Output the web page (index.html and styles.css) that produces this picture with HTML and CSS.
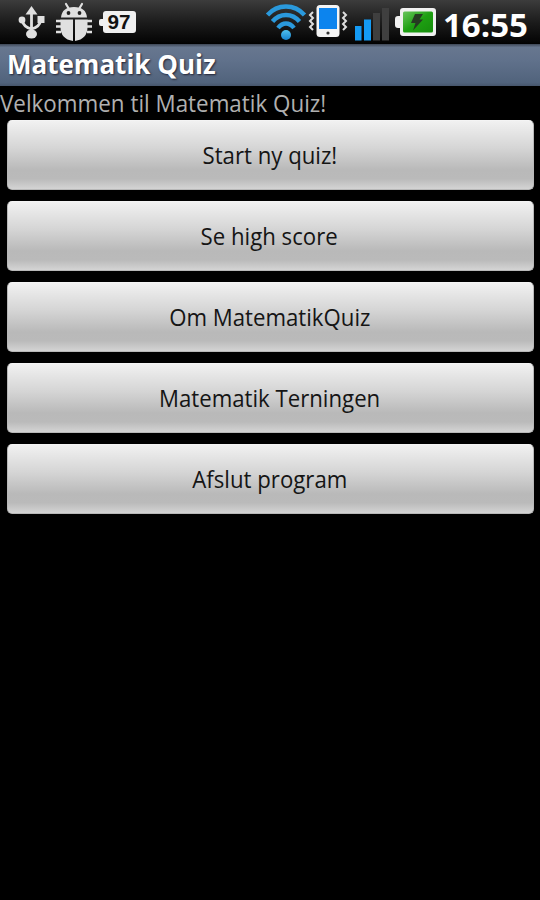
FILE: index.html
```
<!DOCTYPE html>
<html lang="da">
<head>
	<meta charset="UTF-8">
	<title>Matematik Quiz</title>
	<link rel="stylesheet" href="styles.css">
</head>
<body>
	<div class="statusbar">
		<div class="notifications">
			<svg class="usb" width="28" height="36" viewBox="0 0 28 36">
				<g fill="none" stroke="#e0e0e0" stroke-width="2.8">
					<path d="M13.500 7V30M4.500 15v2q1 6 9 8M22.500 15v2q-1 6-9 8"/>
				</g>
				<path d="M13.500 2l6 8.500h-12z" fill="#e0e0e0"/>
				<circle cx="4" cy="16" r="3.400" fill="#e0e0e0"/>
				<path d="M19.500 12h7v7h-7z" fill="#e0e0e0"/>
				<ellipse cx="13.500" cy="30" rx="5.500" ry="4.500" fill="#e0e0e0"/>
			</svg>
			<svg class="bug" width="40" height="40" viewBox="0 0 40 40">
				<g stroke="#e0e0e0" fill="none">
					<path d="M12 2l3 5M28 2l-3 5" stroke-width="2.200" stroke-linecap="round"/>
					<path d="M2 19h5M2 24.500h5M2 30h5M33 19h5M33 24.500h5M33 30h5" stroke-width="2.600"/>
				</g>
				<path d="M7 15.500Q8 5 20 5t13 10.500zM6.500 17.500h12.500v21.500Q6.500 37 6.500 25zM21 17.500h12.500V25Q33.500 37 21 39z" fill="#e0e0e0"/>
				<circle cx="14.500" cy="11" r="1.900" fill="#222"/>
				<circle cx="25.500" cy="11" r="1.900" fill="#222"/>
			</svg>
			<svg class="level" width="40" height="26" viewBox="0 0 40 26">
				<path d="M7 2h27q3 0 3 3v16q0 3-3 3H7q-3 0-3-3v-4H2q-2 0-2-2v-3q0-2 2-2h2V5q0-3 3-3z" fill="#f0f0f0"/>
				<text x="8.500" y="20" textLength="23" lengthAdjust="spacingAndGlyphs">97</text>
			</svg>
		</div>
		<div class="system">
			<svg class="wifi" width="42" height="38" viewBox="0 0 42 38">
				<defs>
					<linearGradient id="blue" x1="0" y1="0" x2="0" y2="1">
						<stop offset="0" stop-color="#4fc0ee"/>
						<stop offset="1" stop-color="#1683d0"/>
					</linearGradient>
				</defs>
				<g fill="none" stroke="#2a99dc" stroke-width="4.400">
					<path d="M2.500 12Q10 3.500 21 3.500T39.500 12"/>
					<path d="M7.500 18.500Q13 12 21 12t13.500 6.500"/>
					<path d="M13 25Q16.500 20.500 21 20.500T29 25"/>
				</g>
				<circle cx="21" cy="32" r="5" fill="url(#blue)"/>
			</svg>
			<svg class="vibrate" width="40" height="34" viewBox="0 0 40 34">
				<rect x="8.500" y="1" width="23" height="32" rx="3.500" fill="#f4f4f4"/>
				<rect x="11" y="4" width="18" height="21" fill="#0c84ee"/>
				<circle cx="20" cy="29" r="1.600" fill="#333"/>
				<g fill="none" stroke="#ddd" stroke-width="2">
					<path d="M5 8l-3 3 3 3-3 3 3 3-3 3 3 3"/>
					<path d="M35 8l3 3-3 3 3 3-3 3 3 3-3 3"/>
				</g>
			</svg>
			<svg class="signal" width="34" height="34" viewBox="0 0 34 34">
				<path d="M0 19h6.500v14.500H0zM9 12.500h7v21H9z" fill="#149bf5"/>
				<path d="M18 6h7v27.500h-7zM27 1h7v32.500h-7z" fill="#3f3f3f"/>
			</svg>
			<svg class="battery" width="42" height="28" viewBox="0 0 42 28">
				<defs>
					<linearGradient id="green" x1="0" y1="0" x2="1" y2="1">
						<stop offset="0" stop-color="#69c45c"/>
						<stop offset=".5" stop-color="#1ea012"/>
						<stop offset="1" stop-color="#168c0c"/>
					</linearGradient>
				</defs>
				<path d="M8 0h30q3 0 3 3v22q0 3-3 3H8q-3 0-3-3v-5H3q-3 0-3-3v-6q0-3 3-3h2V3q0-3 3-3z" fill="#f0f0f0"/>
				<rect x="8" y="3.500" width="30" height="21" rx="1.500" fill="url(#green)"/>
				<path d="M20 6h8l-3.500 5.500H28L18 22.500l2.500-7.500H16z" fill="#263a22"/>
			</svg>
			<span class="clock">16:55</span>
		</div>
	</div>
	<h1 class="titlebar">Matematik Quiz</h1>
	<p class="welcome"><span>Velkommen til Matematik Quiz!</span></p>
	<div class="menu">
		<button><span>Start ny quiz!</span></button>
		<button><span>Se high score</span></button>
		<button><span>Om MatematikQuiz</span></button>
		<button><span>Matematik Terningen</span></button>
		<button><span>Afslut program</span></button>
	</div>
</body>
</html>
```
FILE: styles.css
```
body {
	margin: 0;
	width: 540px;
	height: 900px;
	overflow: hidden;
	background-color: #000;
	font-family: "Open Sans", "Noto Sans", sans-serif;
}
.statusbar {
	display: flex;
	justify-content: space-between;
	height: 44px;
	background: linear-gradient(#3c3c3c, #1c1c1c 50%, #050505 95%, #000);
}
.notifications, .system {
	display: flex;
	align-items: flex-start;
}
.usb {
	margin: 4px 0 0 18px;
}
.bug {
	margin: 2px 0 0 8px;
}
.level {
	margin: 9px 0 0 5px;
}
.level text {
	font: bold 21px "Liberation Sans", Arial, sans-serif;
	fill: #111;
}
.wifi {
	margin-top: 3px;
}
.vibrate {
	margin: 4px 0 0 1px;
}
.signal {
	margin: 7px 0 0 7px;
}
.battery {
	margin: 8px 0 0 6px;
}
.clock {
	width: 87px;
	margin: 2px 10px 0 6px;
	color: #fff;
	font-size: 33px;
	font-weight: bold;
	line-height: 46px;
	white-space: nowrap;
}
.titlebar {
	height: 42px;
	margin: 0;
	padding-left: 7px;
	background: linear-gradient(#3d4655, #67778f 8%, #60718b 40%, #51637c 92%, #47566c);
	color: #fff;
	font-size: 26px;
	font-weight: bold;
	line-height: 41px;
	text-shadow: 1px 1px 2px #223;
}
.welcome {
	height: 34px;
	margin: 0;
	color: #b0b0b0;
	font-size: 24px;
	line-height: 34px;
	white-space: nowrap;
}
.welcome span {
	display: inline-block;
	transform: scaleX(.933);
	transform-origin: 0 0;
}
.menu {
	display: flex;
	flex-direction: column;
	gap: 11px;
	padding: 0 6px 0 7px;
}
button {
	height: 70px;
	padding: 0 2px 0 0;
	border: 1px solid #b8b8b8;
	border-top-color: #f4f4f4;
	border-radius: 5px;
	background: linear-gradient(#f1f1f1, #d5d5d5 40%, #b9b9b9 72%, #bababa 85%, #d4d4d4);
	color: #151515;
	font-family: inherit;
	font-size: 24px;
	line-height: 68px;
}
button span {
	display: inline-block;
	transform: scaleX(.925);
}
```
